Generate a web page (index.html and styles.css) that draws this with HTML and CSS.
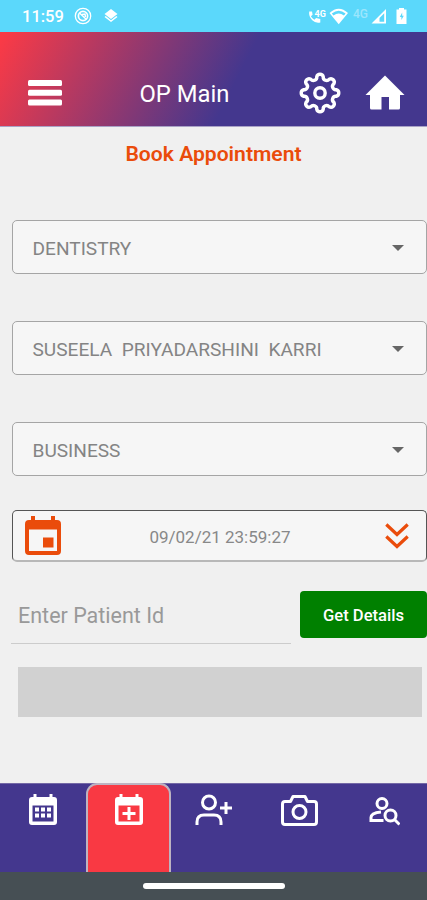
FILE: index.html
```html
<!DOCTYPE html>
<html lang="en">
<head>
<meta charset="utf-8">
<title>OP Main</title>
<link rel="stylesheet" href="styles.css">
</head>
<body>
<div class="status">
  <span class="clock">11:59</span>
  <svg class="st-ring" width="18" height="18" viewBox="0 0 18 18" fill="none" stroke="#fff"><circle cx="9" cy="9" r="7.7" stroke-width="1.3"/><circle cx="9" cy="9" r="4.6" stroke-width="1.7"/><path d="M5.500 6l7 6.500M8 7.500l3-.5.5 3" stroke-width="1.500"/></svg>
  <svg class="st-layers" width="14" height="16" viewBox="0 0 14 16" fill="#fff"><path d="M7 1l6.500 5L7 11 .5 6z"/><path d="M.5 9L7 14l6.500-5-1.200-.9L7 12.200 1.700 8.100z"/></svg>
  <span class="spacer"></span>
  <svg class="st-right" width="120" height="20" viewBox="300 6 120 20" fill="#fff">
    <path d="M309.200 11.500h2.800l.6 3.200-1.700 1.500q1.200 2.400 3.500 3.600l1.700-1.700 4.200.8v3.600q-5 1-8-2.200-3.800-3.800-3.100-8.800z"/>
    <text x="314.500" y="16.500" class="tiny">4G</text>
    <path d="M329.500 13Q338.700 4.500 348 13L338.700 24.200z"/><path d="M331.800 13.500q6.900-5.500 13.800 0l-1.700 2q-5.200-3.800-10.400 0z" fill="#5bd8fb"/>
    <text x="353" y="18" class="tiny faint">4G</text>
    <path fill-rule="evenodd" d="M371.500 23.500L386 9v14.500zM379.500 21.800h4.700v-8.500l-4.700 4.700z"/>
    <path fill-rule="evenodd" d="M399 9.500V8h5v1.500h2.500V24h-10V9.500zM402.200 12.500l-2.400 4.500h1.600v3l2.400-4.300h-1.600z"/>
  </svg>
</div>
<header class="header">
  <svg class="menu" width="34" height="26" viewBox="0 0 34 26" fill="#fff"><rect width="34" height="6" rx="1.500"/><rect y="9.700" width="34" height="6" rx="1.500"/><rect y="19.400" width="34" height="6" rx="1.500"/></svg>
  <h1 class="title">OP Main</h1>
  <svg class="gear" width="44" height="44" viewBox="-22 -22 44 44" fill="none" stroke="#fff" stroke-width="3.400" stroke-linejoin="round"><path d="M16.280-3.240A3.350 3.350 0 0 1 16.280 3.240A3.350 3.350 0 0 0 13.800 9.220A3.350 3.350 0 0 1 9.220 13.800A3.350 3.350 0 0 0 3.240 16.280A3.350 3.350 0 0 1-3.240 16.280A3.350 3.350 0 0 0-9.220 13.800A3.350 3.350 0 0 1-13.800 9.220A3.350 3.350 0 0 0-16.280 3.240A3.350 3.350 0 0 1-16.280-3.240A3.350 3.350 0 0 0-13.800-9.220A3.350 3.350 0 0 1-9.220-13.800A3.350 3.350 0 0 0-3.240-16.280A3.350 3.350 0 0 1 3.240-16.280A3.350 3.350 0 0 0 9.220-13.800A3.350 3.350 0 0 1 13.800-9.220A3.350 3.350 0 0 0 16.280-3.240z"/><circle r="5.200"/></svg>
  <svg class="home" width="40" height="36" viewBox="0 0 40 36" fill="#fff"><path d="M20 .5L39.500 20H35v13q0 1.500-1.500 1.500H24V22h-7.500v12.500H6.500Q5 34.500 5 33V20H.5z"/></svg>
</header>
<main class="main">
  <h2 class="heading">Book Appointment</h2>
  <div class="select"><span>DENTISTRY</span><i class="caret"></i></div>
  <div class="select"><span>SUSEELA&nbsp; PRIYADARSHINI&nbsp; KARRI</span><i class="caret"></i></div>
  <div class="select"><span>BUSINESS</span><i class="caret"></i></div>
  <div class="date">
    <svg width="36" height="40" viewBox="0 0 36 40" fill="#ea4c0b"><path fill-rule="evenodd" d="M6 0h4v4h16V0h4v4h2q4 0 4 4v27q0 4-4 4H4q-4 0-4-4V8q0-4 4-4h2zM4 13.500V35h28V13.500z"/><rect x="18" y="21.500" width="10.500" height="10"/></svg>
    <span class="stamp">09/02/21 23:59:27</span>
    <svg class="chevrons" width="24" height="26" viewBox="0 0 24 26" fill="none" stroke="#ea4c0b" stroke-width="3.200"><path d="M1.300 1.500L12 11.500 22.700 1.500M1.300 13.500L12 23.500l10.700-10"/></svg>
  </div>
  <div class="row"><div class="input">Enter Patient Id</div><button class="button">Get Details</button></div>
  <div class="panel"></div>
</main>
<nav class="nav">
  <div class="tab"><svg width="28" height="32" viewBox="0 0 28 32" fill="#fff"><path fill-rule="evenodd" d="M4.500 0h3v3h13V0h3v3h1.500q3 0 3 3v22q0 3-3 3H3q-3 0-3-3V6q0-3 3-3h1.500zM3.500 11.500V27.500h21V11.500z"/><path d="M6 13.500h4v4H6zm6 0h4v4h-4zm6 0h4v4h-4zM6 19.500h4v4H6zm6 0h4v4h-4zm6 0h4v4h-4z"/></svg></div>
  <div class="tab active"><svg width="28" height="32" viewBox="0 0 28 32" fill="#fff"><path fill-rule="evenodd" d="M4.500 0h3v3h13V0h3v3h1.500q3 0 3 3v22q0 3-3 3H3q-3 0-3-3V6q0-3 3-3h1.500zM3.500 11.500V27.500h21V11.500z"/><path d="M12.500 13h3v5h5v3h-5v5h-3v-5h-5v-3h5z"/></svg></div>
  <div class="tab"><svg width="38" height="32" viewBox="0 0 38 32" fill="none" stroke="#fff" stroke-width="3"><circle cx="15" cy="8.500" r="6.500"/><path d="M3 31v-3q0-7 7-7h10q7 0 7 7v3M32 8v12M26 14h12"/></svg></div>
  <div class="tab"><svg width="38" height="32" viewBox="0 0 38 32" fill="none" stroke="#fff" stroke-width="3" stroke-linejoin="round"><path d="M5 7.500H10.500l2.500-5h12L27.500 7.500H34Q36.500 7.500 36.500 10v18Q36.500 30.500 34 30.500h-29Q2.500 30.500 2.500 28v-18Q2.500 7.500 5 7.500z"/><circle cx="19.500" cy="18" r="6.500"/></svg></div>
  <div class="tab"><svg width="32" height="32" viewBox="0 0 32 32" fill="none" stroke="#fff" stroke-width="3"><circle cx="14" cy="9.500" r="5"/><path d="M15.500 26.500H3v-3q0-4.500 10-5.500"/><circle cx="22.500" cy="21.500" r="5.500"/><path d="M26.500 25.500l5 5"/></svg></div>
</nav>
<footer class="system"><div class="pill"></div></footer>
</body>
</html>
```
FILE: styles.css
```css
* { box-sizing: border-box; }
body { margin: 0; width: 427px; height: 900px; overflow: hidden; display: flex; flex-direction: column; background: #f0f0f0; font-family: Roboto, sans-serif; }
svg { display: block; flex: none; }
.status { height: 32px; background: #5bd8fb; display: flex; align-items: center; padding: 0 7px 0 22px; color: #fff; }
.clock { width: 42px; font-size: 16.5px; font-weight: 500; padding-top: 1px; }
.st-ring { margin-left: 10px; }
.st-layers { margin-left: 12px; }
.spacer { flex: 1; }
.tiny { font-size: 9px; font-weight: 700; }
.faint { font-size: 12px; fill: #9be6fd; font-weight: 500; }
.header { height: 95px; margin-bottom: -1px; display: flex; align-items: flex-start; color: #fff; background: linear-gradient(117deg, #fa3a46 1%, #44378e 55%); border-bottom: 1px solid #a9a2c6; }
.menu { margin: 48px 0 0 28px; }
.title { margin: 48px 0 0 77.5px; width: 92px; white-space: nowrap; font-size: 23.8px; line-height: 28px; font-weight: 400; }
.gear { margin: 39px 0 0 66.500px; }
.home { margin: 43px 0 0 23px; }
.main { height: 657px; display: flex; flex-direction: column; }
.heading { margin: 15px 0 53px; height: 26px; line-height: 26px; text-align: center; font-size: 21.1px; font-weight: 600; color: #ea4c0b; }
.select { margin: 0 0 47px 12px; height: 54px; border: 1.5px solid #a5a5a5; border-radius: 5px; background: #f6f6f6; display: flex; align-items: center; justify-content: space-between; padding: 1px 22px 0 19.5px; font-size: 19.1px; color: #848484; }
.select span { padding-top: 1px; }
.caret { border: 6px solid transparent; border-top-color: #666; border-bottom: 0; }
.date { margin: -13px 0 0 12px; height: 52px; border: 1px solid #555; border-bottom: 2px solid #b8b8b8; border-radius: 5px; background: #f6f6f6; display: flex; align-items: center; justify-content: space-between; padding: 0 17px 0 12px; font-size: 17px; color: #888; }
.stamp { margin-right: 6px; padding-top: 2px; }
.chevrons { margin-top: 1px; }
.row { display: flex; margin: 29px 0 0 11px; justify-content: space-between; align-items: flex-start; }
.input { width: 280px; height: 53px; border-bottom: 1px solid #ccc; padding-left: 7px; line-height: 50px; font-size: 21.5px; color: #999; }
.button { width: 127px; height: 47px; border: 0; border-radius: 4px; background: #008000; color: #fff; font: 500 16.600px/47px Roboto, sans-serif; padding: 1px 0 0; }
.panel { margin: 23px 5px 0 18px; height: 50px; background: #d1d1d1; }
.nav { height: 89px; background: #44378e; display: grid; grid-template-columns: repeat(5, 1fr); border-top: 1px solid #7468a6; }
.tab { display: flex; justify-content: center; align-items: flex-start; padding-top: 10px; }
.active { background: #f93943; border: 2px solid #bdb3c1; border-bottom: 0; border-radius: 11px 11px 0 0; margin: -1px -0.5px 0 0.5px; padding-top: 9px; }
.system { height: 28px; background: #464f54; display: flex; justify-content: center; align-items: center; }
.pill { width: 142px; height: 6px; border-radius: 3px; background: #fff; }
```
